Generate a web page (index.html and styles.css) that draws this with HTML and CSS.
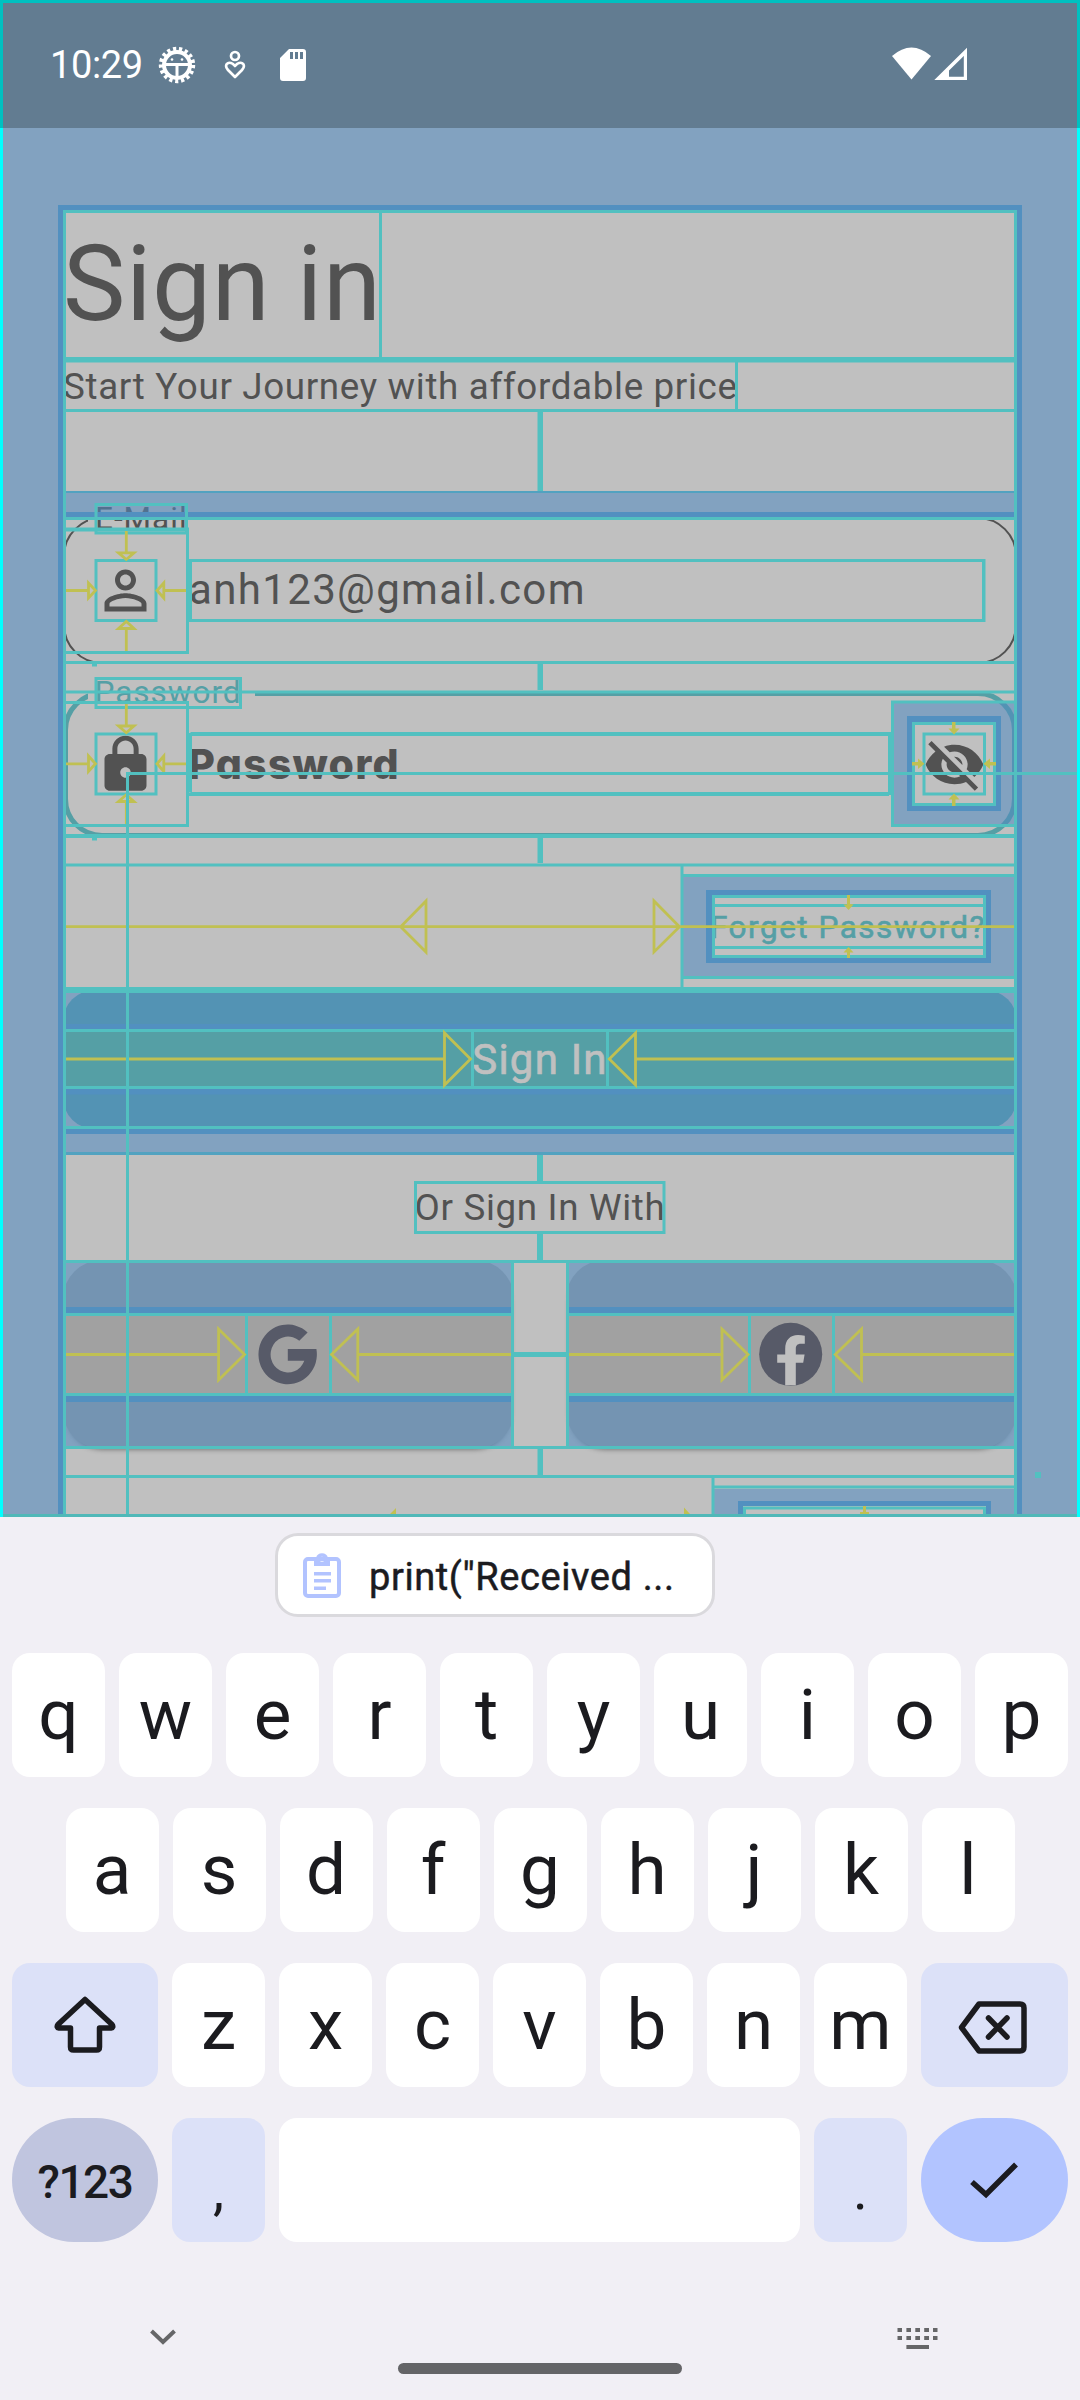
FILE: index.html
```html
<!DOCTYPE html>
<html lang="en">
<head>
<meta charset="utf-8">
<title>Sign in</title>
<link rel="stylesheet" href="styles.css">
</head>
<body>
<div class="screen">
  <header class="status">
    <span class="clock">10:29</span>
    <svg class="st-bug" width="38" height="38" viewBox="-19 -19 38 38">
      <circle r="15.6" fill="none" stroke="#fff" stroke-width="5.200" stroke-dasharray="3.1 2.665"/>
      <circle r="13" fill="none" stroke="#fff" stroke-width="4"/>
      <path d="M-13-.5H13M0-.5V14" stroke="#fff" stroke-width="3"/>
      <circle cx="-5" cy="-5.500" r="1.300" fill="#fff"/><circle cx="5" cy="-5.500" r="1.300" fill="#fff"/>
    </svg>
    <svg class="st-heart" width="22" height="30" viewBox="0 0 22 30">
      <circle cx="11" cy="6" r="4" fill="none" stroke="#fff" stroke-width="2.700"/>
      <path d="M11 27L4 20C-1.500 14 6 9.500 11 16C16 9.500 23.500 14 18 20Z" fill="none" stroke="#fff" stroke-width="2.700" stroke-linejoin="round"/>
    </svg>
    <svg class="st-sd" width="26" height="32" viewBox="0 0 26 32">
      <path fill="#fff" fill-rule="evenodd" d="M9 0H23Q26 0 26 3V29Q26 32 23 32H3Q0 32 0 29V9ZM10 3V10H13V3ZM15 3V10H18V3ZM20 3V10H23V3Z"/>
    </svg>
    <svg class="st-net" width="76" height="34" viewBox="0 0 76 34">
      <path fill="#fff" d="M0 9Q19.500-8 39 9L19.500 32.500Z"/>
      <path fill="#fff" fill-rule="evenodd" d="M75 .7V33H42.300ZM71.800 9L57 23.500V29.800H71.800Z"/>
    </svg>
  </header>

  <main class="app">
    <h1 class="title">Sign in</h1>
    <p class="subtitle">Start Your Journey with affordable price</p>

    <div class="field email">
      <span class="label">E-Mail</span>
      <svg class="icon" viewBox="0 0 24 24"><path d="M12 5.900c1.160 0 2.100.94 2.100 2.100s-.94 2.100-2.100 2.100S9.900 9.160 9.900 8s.94-2.100 2.100-2.100m0 9c2.970 0 6.100 1.460 6.100 2.100v1.100H5.900V17c0-.64 3.130-2.100 6.100-2.100M12 4C9.790 4 8 5.790 8 8s1.790 4 4 4 4-1.790 4-4-1.790-4-4-4zm0 9c-2.670 0-8 1.340-8 4v3h16v-3c0-2.660-5.330-4-8-4z"/></svg>
      <span class="value">anh123@gmail.com</span>
    </div>

    <div class="field password">
      <span class="label">Password</span>
      <svg class="icon" viewBox="0 0 24 24"><path d="M18 8h-1V6c0-2.760-2.240-5-5-5S7 3.240 7 6v2H6c-1.100 0-2 .9-2 2v10c0 1.100.9 2 2 2h12c1.100 0 2-.9 2-2V10c0-1.100-.9-2-2-2zm-6 9c-1.100 0-2-.9-2-2s.9-2 2-2 2 .9 2 2-.9 2-2 2zm3.100-9H8.900V6c0-1.710 1.390-3.100 3.100-3.100s3.100 1.390 3.100 3.100v2z"/></svg>
      <span class="value hint">Password</span>
      <svg class="icon eye" viewBox="0 0 24 24"><path d="M12 7c2.760 0 5 2.240 5 5 0 .65-.13 1.260-.36 1.830l2.920 2.920c1.510-1.260 2.700-2.890 3.430-4.750-1.730-4.390-6-7.500-11-7.500-1.400 0-2.740.25-3.980.7l2.160 2.160C10.740 7.130 11.350 7 12 7zM2 4.270l2.280 2.280.46.46C3.080 8.300 1.780 10.020 1 12c1.730 4.390 6 7.500 11 7.500 1.550 0 3.030-.3 4.380-.84l.42.42L19.730 22 21 20.730 3.270 3 2 4.270zM7.530 9.800l1.550 1.550c-.05.21-.08.43-.08.65 0 1.660 1.340 3 3 3 .22 0 .44-.03.65-.08l1.550 1.550c-.67.33-1.410.53-2.200.53-2.760 0-5-2.240-5-5 0-.79.2-1.530.53-2.200zm4.310-.78l3.150 3.150.02-.16c0-1.660-1.340-3-3-3l-.17.01z"/></svg>
    </div>

    <div class="forgot"><span>Forget Password?</span></div>
    <div class="submit"><span>Sign In</span></div>
    <p class="or">Or Sign In With</p>
    <div class="social"><div class="social-btn"></div><div class="social-btn"></div></div>
  </main>

  <!-- layout guides: paddings, bounds and alignment arrows -->
  <svg class="guides" width="1080" height="1517" viewBox="0 0 1080 1517">
    <g class="pad">
      <path fill-rule="evenodd" d="M3 128H1077V1514H3ZM63 210V1514H1017V210Z"/>
      <path d="M66 491H1014V517H66ZM66 1129H1014V1155H66Z"/>
      <path fill-rule="evenodd" d="M894 703H1014V824H894ZM912 722V806H996V722Z"/>
      <path fill-rule="evenodd" d="M683 877H1014V976H683ZM712 895V958H986V895Z"/>
      <path d="M66 990H1014V1029H66ZM66 1089H1014V1129H66Z"/>
      <path d="M66 1263H511V1313H66ZM66 1396H511V1446H66ZM569 1263H1014V1313H569ZM569 1396H1014V1446H569Z"/>
      <path fill-rule="evenodd" d="M714 1489H1014V1514H714ZM743 1506V1514H986V1506Z"/>
    </g>
    <g class="edge">
      <path fill-rule="evenodd" d="M58 205H1022V1514H58ZM63 210V1514H1017V210Z"/>
      <path d="M66 512H1014V517H66ZM66 1129H1014V1134H66ZM66 1024H1014V1029H66ZM66 1089H1014V1094.500H66Z"/>
      <path fill-rule="evenodd" d="M907 716H1001V811H907ZM912 722V806H996V722Z"/>
      <path fill-rule="evenodd" d="M706 890H991V963H706ZM712 895V958H986V895Z"/>
      <path d="M66 1307H511V1313H66ZM66 1396H511V1402H66ZM569 1307H1014V1313H569ZM569 1396H1014V1402H569Z"/>
      <path d="M738 1514V1501H991V1514H986V1506H743V1514Z"/>
    </g>
    <path class="seam" d="M66 491H1014V493H66ZM66 1152H1014V1155H66Z"/>

    <g class="social-icons">
      <path class="ink" d="M316.400 1349A29.200 29.900 0 1 1 307.600 1332.500L299.300 1340.800A17.400 18 0 1 0 304.300 1360.800H287.800V1349Z"/>
      <circle class="ink" cx="790.700" cy="1354.300" r="31.500"/>
      <path class="paper" d="M785.200 1385.300V1362.700H777.200V1354.600H785.200V1349C785.200 1340 790 1335 798 1335Q801.500 1335 804.800 1335.700V1343.800H801C797 1343.800 795.800 1346 795.800 1349V1354.600H804.600L803.200 1362.700H795.800V1385.300Z"/>
    </g>

    <g class="bound">
      <path d="M64.500 1514V211.500H1015.500V1514"/>
      <path d="M380.500 212V358M66 358.500H1014M66 361H1014M736.500 361V412M66 410.500H1014"/>
      <path d="M539 412V491M541.500 412V491M66 518.500H1014"/>
      <path d="M96 504.500H186.500V533H96Z"/>
      <path d="M66 529H187.500V652.500H66M66 530H187.500M96 560.500H156V620.500H96ZM190.500 560.500H984V620.500H190.500ZM983.500 559V622"/>
      <path d="M66 662.500H1014M92 665H97M539 664V690M541.500 664V690M66 692H1014"/>
      <path d="M96 678.500H240.500V707.500H96Z"/>
      <path d="M66 702.500H187.500V825.500H66M96 734H156V794H96ZM190.500 733.500H889.500V793.500H190.500M190.500 734.500V792.500M189 734.500H889M189 794.500H889"/>
      <path d="M1014 702H892.500V825.500H1014M913.500 723.500H994.500V804.500H913.500ZM924 734H984.500V794H924Z"/>
      <path d="M66 835.500H1014M66 836.500H1014M92 839H97M539 838V863M541.500 838V863M66 865H1014M682 865V987"/>
      <path d="M683 875.500H1014M683 977.500H1014M713.500 896.500H984.500V956.500H713.500ZM713 905.500H985M713 947.500H985"/>
      <path d="M66 988.500H1014M66 991.500H1014M66 1030.500H1014M66 1087.500H1014M472.500 1030V1088M607.500 1030V1088M66 1127.500H1014"/>
      <path d="M538.500 1155V1181M541.500 1155V1181M415.500 1182.500H664V1232.500H415.500ZM538.500 1234V1261M541.500 1234V1261"/>
      <path d="M66 1261.500H1014M512.500 1261V1449M567.500 1261V1449M66 1314.500H513M66 1394.500H513M568 1314.500H1014M568 1394.500H1014M66 1447.500H1014"/>
      <path d="M246.500 1315V1395M330.500 1315V1395M749.500 1315V1395M833.500 1315V1395M514 1353.500H567M514 1355.500H567"/>
      <path d="M539 1449V1476M541.500 1449V1476M66 1476.500H1014M713 1476V1514M714 1487H1014M744.500 1514V1508H984.500V1514"/>
      <path d="M1077 773.500H127.500V1514"/>
      <path d="M1035 1473.500H1041M1035 1476.500H1041"/>
    </g>

    <g class="align">
      <path d="M126.300 531V552M118.500 552.800H134L126.300 559.500ZM126.300 651V628M118.500 628.500H134L126.300 621.500ZM66 590.500H88M88.500 583V598L95.500 590.500ZM186 590.500H165M163.800 583V598L157 590.500Z"/>
      <path d="M126.300 704V725M118.500 726H134L126.300 732.700ZM126.300 824V802M118.500 801.500H134L126.300 794.800ZM66 763.800H88M88.500 756V771.500L95.500 763.800ZM186 763.800H165M163.800 756V771.500L157 763.800Z"/>
      <path d="M66 926.700H1014M426 901V952L400.700 926.700ZM654 901V952L679.500 926.700Z"/>
      <path d="M66 1059H444M444.500 1033V1085L470.500 1059ZM1014 1059H636M635.500 1033V1085L609.300 1059Z"/>
      <path d="M66 1354.500H218M218.600 1329V1380L244.500 1354.500ZM511 1354.500H358M357.800 1329V1380L331.500 1354.500Z"/>
      <path d="M569 1354.500H721M722 1329V1380L748 1354.500ZM1014 1354.500H862M861.500 1329V1380L835.300 1354.500Z"/>
      <path class="solid" d="M952 722H955.500V728.500H959.500L954 734.500L948.500 728.500H952ZM952 806H955.500V799.500H959.500L954 793.500L948.500 799.500H952ZM912 762H918V758.500L924.500 763.700L918 769V765.500H912ZM996 762H990V758.500L983.500 763.700L990 769V765.500H996Z"/>
      <path class="solid" d="M847 895H850V904L853.500 904.500L848.500 910L843.500 904.500H847ZM847 958H850V952.500H853.500L848.500 947L843.500 952.500H847ZM863 1506H866V1512H869V1514H860V1512H863ZM684 1507.500L690 1514H684ZM396 1508V1514H390Z"/>
    </g>
    <path class="cursor" d="M127.500 1514V773.500H190"/>
    <path class="frame-top" d="M0 0H1080V128H1077V3H3V128H0Z"/>
    <path class="frame" d="M0 128H3V1517H0ZM1077 128H1080V1517H1077Z"/>
    <path class="frame-bottom" d="M3 1514H1077V1517H3Z"/>
  </svg>

  <section class="keyboard">
    <div class="chip">
      <svg width="38" height="46" viewBox="0 0 38 46">
        <rect x="2" y="7" width="34" height="37" rx="3" fill="none" stroke="#b2c3ff" stroke-width="4"/>
        <path fill="#b2c3ff" fill-rule="evenodd" d="M11 6H13A6.200 6.200 0 0 1 25 6H27V14H11ZM19 4.700A2.500 2.500 0 1 0 19 9.700A2.500 2.500 0 1 0 19 4.700ZM11 20H28V23.500H11ZM11 27H28V30.500H11ZM11 34.500H23V38H11Z"/>
      </svg>
      <span>print("Received ...</span>
    </div>
    <div class="keys">
      <div class="row"><b>q</b><b>w</b><b>e</b><b>r</b><b>t</b><b>y</b><b>u</b><b>i</b><b>o</b><b>p</b></div>
      <div class="row middle"><b>a</b><b>s</b><b>d</b><b>f</b><b>g</b><b>h</b><b>j</b><b>k</b><b>l</b></div>
      <div class="row">
        <b class="wide tint"><svg width="64" height="62" viewBox="0 0 64 62"><path d="M32 5.500L5 30.500Q3 33.500 6 34H17.500V53Q17.500 56 20.500 56H43.500Q46.500 56 46.500 53V34H58Q61 33.500 59 30.500Z"/></svg></b>
        <b>z</b><b>x</b><b>c</b><b>v</b><b>b</b><b>n</b><b>m</b>
        <b class="wide tint"><svg width="72" height="60" viewBox="0 0 72 60"><path d="M3.500 32.500L21 9H62Q66 9 66 13V52Q66 56 62 56H21ZM30.500 23L49 42M49 23L30.500 42"/></svg></b>
      </div>
      <div class="row">
        <b class="wide pill num">?123</b><b class="tint punct">,</b><b class="space"></b><b class="tint punct">.</b>
        <b class="wide pill enter"><svg width="52" height="40" viewBox="0 0 52 40"><path d="M4 22L18 34.500L48 4.500"/></svg></b>
      </div>
    </div>
    <footer class="nav">
      <svg class="hide" width="30" height="20" viewBox="0 0 30 20"><path d="M3.500 4L15 15L26.500 4" fill="none" stroke="#666668" stroke-width="4"/></svg>
      <i class="home"></i>
      <svg class="switch" width="42" height="24" viewBox="0 0 42 24"><path fill="#666668" d="M.5 1H5V5H.5ZM9.400 1H14V5H9.400ZM18.300 1H23V5H18.300ZM27.200 1H32V5H27.200ZM36 1H40.500V5H36ZM.5 9H5V13H.5ZM9.400 9H14V13H9.400ZM18.300 9H23V13H18.300ZM27.200 9H32V13H27.200ZM36 9H40.500V13H36ZM9.400 18H32V22H9.400Z"/></svg>
    </footer>
  </section>
</div>
</body>
</html>
```
FILE: styles.css
```css
* { box-sizing: border-box; }
body { margin: 0; font-family: Roboto, sans-serif; }
h1, p { margin: 0; font-weight: 400; }

.screen {
  position: relative;
  display: flex;
  flex-direction: column;
  width: 1080px;
  height: 2400px;
  overflow: hidden;
}

/* status bar */
.status {
  display: flex;
  align-items: center;
  height: 128px;
  padding: 3px 112px 0 50px;
  background: #627c91;
  color: #fff;
}
.clock { width: 93px; margin-top: -1px; font-size: 38px; letter-spacing: -.4px; white-space: nowrap; }
.st-bug { margin-left: 15px; margin-top: -1px; }
.st-heart { margin-left: 28px; margin-top: -2px; }
.st-sd { margin-left: 34px; margin-top: -1px; }
.st-net { margin-left: auto; margin-top: -4px; }

/* application content */
.app {
  flex: none;
  display: flex;
  flex-direction: column;
  height: 1389px;
  padding: 82px 63px 0;
  background: #c0c0c0;
  color: #525252;
  overflow: hidden;
}
.app > * { flex: none; }
.title { height: 150px; font-size: 105px; line-height: 150px; letter-spacing: .6px; }
.subtitle { height: 52px; padding-top: 1px; font-size: 36.75px; line-height: 52px; letter-spacing: .66px; white-space: nowrap; }

.field {
  position: relative;
  display: flex;
  align-items: center;
  height: 147px;
  border: 2.6px solid #525252;
  border-radius: 39px;
}
.email { margin-top: 105px; }
.password { margin-top: 26.500px; border: 5.25px solid #559fa5; }
.label {
  position: absolute;
  left: 30px;
  top: -16.500px;
  padding: 0 13px 0 0;
  background: #c0c0c0;
  font-size: 31.5px;
  line-height: 31.5px;
  letter-spacing: 1px;
  white-space: nowrap;
}
.label::before {
  content: "";
  position: absolute;
  right: 100%;
  top: 0;
  width: 7px;
  height: 100%;
  background: #c0c0c0;
}
.password .label { left: 26.500px; top: -18.500px; color: #559fa5; }
.icon { width: 63px; height: 63px; margin-left: 29px; fill: #525252; }
.password .icon { margin-left: 26.250px; }
.value { margin-left: 32px; font-size: 42px; line-height: 60px; letter-spacing: 1.35px; margin-top: -2px; }
.hint {
  margin-top: 0;
  margin-left: 31px;
  font-family: Inter, Roboto, sans-serif;
  font-size: 41px;
  font-weight: 800;
  font-feature-settings: "cv11";
  letter-spacing: 1.2px;
}
.password .eye { margin-left: auto; margin-right: 26.250px; }

.forgot {
  display: flex;
  justify-content: flex-end;
  align-items: center;
  height: 126px;
  margin-top: 26px;
  padding: 1px 31px 0 0;
  color: #559fa5;
  font-size: 31.5px;
  letter-spacing: 1.5px;
  -webkit-text-stroke: .6px #559fa5;
}
.submit {
  display: flex;
  align-items: center;
  justify-content: center;
  height: 139px;
  border-radius: 31.5px;
  background: #559fa5;
  color: #c0c0c0;
  font-size: 42px;
  letter-spacing: 1.2px;
  -webkit-text-stroke: .7px #c0c0c0;
}
.or {
  height: 131px;
  line-height: 158px;
  text-align: center;
  font-size: 36.75px;
  letter-spacing: .66px;
}
.social { display: flex; justify-content: space-between; height: 189px; }
.social-btn { width: 451px; border-radius: 39px; background: #a1a1a1; box-shadow: 0 4px 4px -3px rgba(60, 60, 60, .5); }

/* layout guides */
.guides { position: absolute; left: 0; top: 0; }
.pad { fill: rgba(82, 139, 192, .565); }
.edge { fill: #5290c0; }
.seam { fill: #52a2c0; }
.ink { fill: #575a68; }
.paper { fill: #c0c0c0; }
.bound, .cursor { fill: none; stroke: #52c0c0; stroke-width: 3; }
.align { fill: none; stroke: #c0c052; stroke-width: 2.8; }
.solid { fill: #c0c052; stroke: none; }
.frame-top { fill: #00c0c0; }
.frame { fill: #0ff; }
.frame-bottom { fill: #50b8b8; }

/* on-screen keyboard */
.keyboard {
  flex: 1;
  display: flex;
  flex-direction: column;
  padding-top: 16px;
  background: #f1eff5;
  color: #1b1b1f;
}
.chip {
  display: flex;
  align-items: center;
  width: 440px;
  height: 84px;
  margin-left: 275px;
  padding-left: 25px;
  border: 3px solid #dad9dd;
  border-radius: 23px;
  background: #fff;
  font-size: 38px;
  white-space: nowrap;
}
.chip span { margin-left: 28px; padding-top: 4px; letter-spacing: .6px; -webkit-text-stroke: .5px #1b1b1f; }
.keys { display: flex; flex-direction: column; gap: 31px; margin-top: 36px; padding-left: 12px; }
.row { display: flex; gap: 14px; height: 124px; }
.middle { padding-left: 53.500px; }
.row b {
  display: flex;
  align-items: center;
  justify-content: center;
  flex: none;
  width: 93px;
  padding-bottom: 2px;
  border-radius: 18px;
  background: #fff;
  font-size: 71px;
  font-weight: 400;
}
.row .wide { width: 146.500px; padding-bottom: 0; }
.row .wide:first-child { width: 146px; }
.row .tint { background: #dce1f8; }
.row .pill { border-radius: 62px; background: #c0c5df; }
.row .enter { background: #b2c4ff; }
.row .num { padding-top: 3px; font-size: 46px; font-weight: 500; letter-spacing: -1.500px; }
.row .punct { font-size: 56px; padding-top: 22px; }
.row .space { width: 521px; }
.row svg { fill: none; stroke: #1b1b1f; stroke-width: 5.5; stroke-linejoin: round; stroke-linecap: round; }
.enter svg { stroke-linecap: butt; stroke-linejoin: miter; }
.nav { display: flex; align-items: flex-start; padding: 84.500px 141px 0 148px; }
.home { width: 284px; height: 11px; margin: 36px 0 0 220px; border-radius: 6px; background: #646467; }
.switch { margin-left: auto; }
```
